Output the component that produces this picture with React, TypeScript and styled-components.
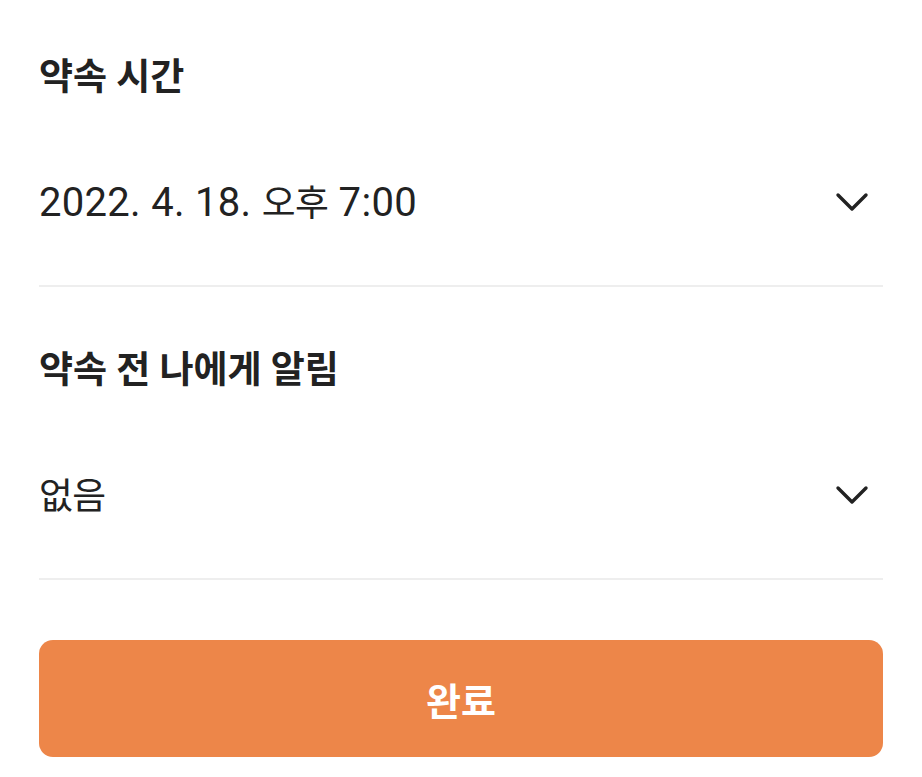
import React from "react";
import styled, { createGlobalStyle } from "styled-components";

const Global = createGlobalStyle`
  html, body { margin: 0; padding: 0; background: #ffffff; }
  body { font-family: Roboto, "Noto Sans CJK KR", sans-serif; color: #222222; }
`;

const Page = styled.div`
  width: 922px;
  box-sizing: border-box;
  padding: 38px 39px 20px;
  display: flex;
  flex-direction: column;
`;

const Section = styled.section<{ $first?: boolean }>`
  display: flex;
  flex-direction: column;
  padding-top: ${(p) => (p.$first ? "0" : "44px")};
  border-bottom: 2px solid #eeeeee;
`;

const Title = styled.h2`
  margin: 0;
  height: 72px;
  display: flex;
  align-items: center;
  font-size: 37px;
  font-weight: 700;
  color: #222222;
  letter-spacing: 0;
`;

const SelectRow = styled.button`
  all: unset;
  display: flex;
  align-items: center;
  justify-content: space-between;
  height: 58px;
  padding: 61px 14px 56px 0;
  cursor: pointer;
`;

const Value = styled.span`
  font-size: 40px;
  font-weight: 400;
  color: #222222;
  letter-spacing: 0.3px;
`;

const Hangul = styled.span`
  font-size: 0.92em;
  letter-spacing: -0.5px;
`;

const Chevron = () => (
  <svg width="34" height="26" viewBox="0 0 34 26" fill="none">
    <path d="M3 8 L17 22 L31 8" stroke="#222" strokeWidth="3.4" strokeLinecap="round" strokeLinejoin="round" />
  </svg>
);

const Submit = styled.button`
  margin-top: 60px;
  height: 117px;
  border: none;
  border-radius: 14px;
  background: #ed8649;
  color: #ffffff;
  font-family: Roboto, "Noto Sans CJK KR", sans-serif;
  font-size: 38px;
  font-weight: 700;
  cursor: pointer;
`;

export default function App() {
  return (
    <>
      <Global />
      <Page>
        <Section $first>
          <Title>약속 시간</Title>
          <SelectRow>
            <Value>
              2022. 4. 18. <Hangul>오후</Hangul> 7:00
            </Value>
            <Chevron />
          </SelectRow>
        </Section>
        <Section>
          <Title>약속 전 나에게 알림</Title>
          <SelectRow>
            <Value>
              <Hangul>없음</Hangul>
            </Value>
            <Chevron />
          </SelectRow>
        </Section>
        <Submit>완료</Submit>
      </Page>
    </>
  );
}
